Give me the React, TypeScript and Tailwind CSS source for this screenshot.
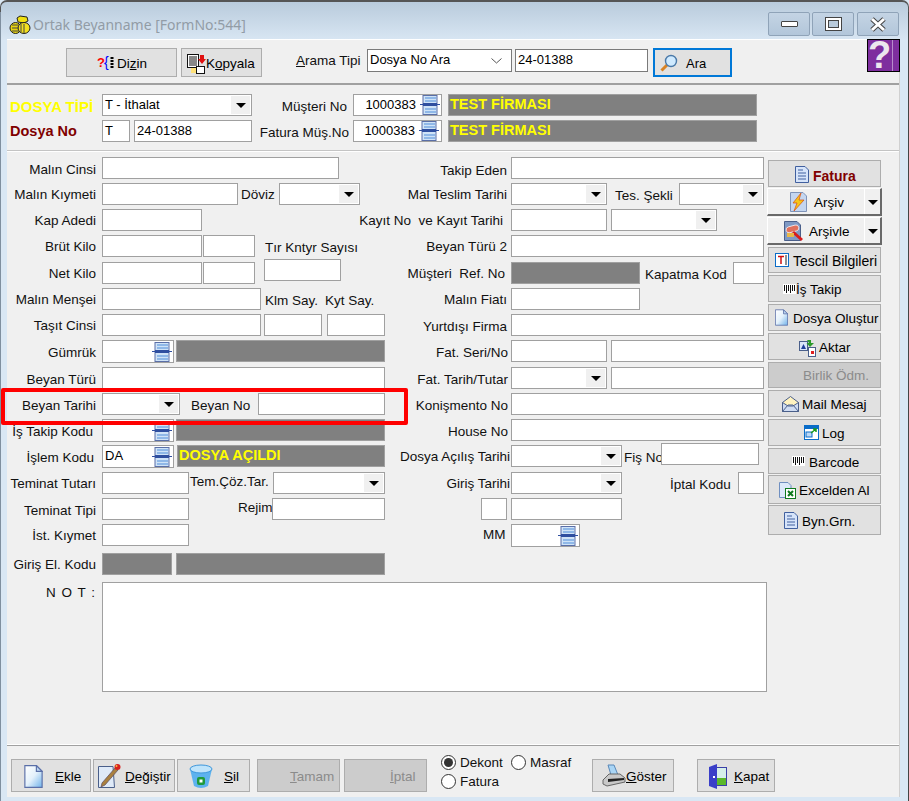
import React from "react";

function L({ c, children }: { c: string; children: React.ReactNode }) {
  return <div className={`absolute h-[16px] leading-[18px] whitespace-nowrap text-[13.5px] text-[#111] ${c}`}>{children}</div>;
}
function R({ c, children }: { c: string; children: React.ReactNode }) {
  return <div className={`absolute h-[16px] leading-[18px] whitespace-nowrap text-[13.5px] text-[#111] ${c}`}>{children}</div>;
}
function I({ c, children }: { c: string; children?: React.ReactNode }) {
  return <div className={`absolute bg-white border border-[#a0a0a0] text-[13px] leading-[19px] pl-[2px] whitespace-nowrap overflow-hidden text-black ${c}`}>{children}</div>;
}
function G({ c, children }: { c: string; children?: React.ReactNode }) {
  return <div className={`absolute bg-[#808080] border border-[#a0a0a0] text-[14.5px] font-bold leading-[19px] pl-[1px] whitespace-nowrap overflow-hidden text-[#ffff00] ${c}`}>{children}</div>;
}
function Stack({ c }: { c: string }) {
  return (
    <svg className={`absolute ${c}`} width="20" height="20" viewBox="0 0 20 20">
      <rect x="3" y="0.5" width="14" height="19" fill="#cfe3f7" stroke="#5a6fa8" />
      <rect x="5" y="2" width="11" height="2" fill="#8fb8e8" />
      <rect x="5" y="5" width="11" height="2" fill="#8fb8e8" />
      <rect x="5" y="13" width="11" height="2" fill="#8fb8e8" />
      <rect x="5" y="16" width="11" height="2" fill="#8fb8e8" />
      <rect x="3" y="8" width="14" height="3" fill="#2f4fa0" />
      <rect x="0" y="9" width="20" height="1" fill="#2f4fa0" />
    </svg>
  );
}
function Arrow() {
  return (
    <div className="absolute right-[1px] top-[1px] bottom-[1px] w-[19px] bg-[#f0f0f0] flex items-center justify-center">
      <div className="w-0 h-0 border-l-[5px] border-r-[5px] border-t-[5px] border-l-transparent border-r-transparent border-t-black" />
    </div>
  );
}
function C({ c, children }: { c: string; children?: React.ReactNode }) {
  return <I c={c}>{children}<Arrow /></I>;
}
function B({ c, children, off }: { c: string; children?: React.ReactNode; off?: boolean }) {
  return (
    <div className={`absolute border border-[#adadad] text-[13.5px] whitespace-nowrap ${off ? "bg-[#cccccc] text-[#8b8b8b]" : "bg-[#e1e1e1] text-black"} ${c}`}>
      {children}
    </div>
  );
}
function T({ c, children }: { c: string; children: React.ReactNode }) {
  return <span className={`absolute h-[16px] leading-[18px] ${c}`}>{children}</span>;
}
function Doc({ c, w = 16, h = 20 }: { c: string; w?: number; h?: number }) {
  return (
    <svg className={`absolute ${c}`} width={w} height={h} viewBox="0 0 16 20">
      <defs>
        <linearGradient id="dg" x1="0" y1="0" x2="1" y2="1">
          <stop offset="0" stopColor="#ffffff" />
          <stop offset="0.5" stopColor="#e4f1fb" />
          <stop offset="1" stopColor="#6fb2ea" />
        </linearGradient>
      </defs>
      <path d="M0.5 0.5H10.500L15.500 5.500V19.500H0.500Z" fill="url(#dg)" stroke="#5a6fa8" />
      <path d="M10.500 0.500V5.500H15.500Z" fill="#bcd6f0" stroke="#5a6fa8" />
    </svg>
  );
}
function Lines({ c }: { c: string }) {
  return (
    <svg className={`absolute ${c}`} width="14" height="17" viewBox="0 0 14 17">
      <path d="M0.5 0.5H10L13.500 4V16.500H0.500Z" fill="#d6e4fa" stroke="#41609f" />
      <path d="M3 4H8M3 7H11M3 10H11M3 13H11" stroke="#41609f" />
    </svg>
  );
}
function Bar({ c }: { c: string }) {
  return (
    <svg className={`absolute ${c}`} width="13" height="10" viewBox="0 0 13 10">
      <rect width="13" height="10" fill="#fff" />
      <path d="M1.500 1V7M3.500 1V9M5.500 1V7M7.500 1V9M9.500 1V7M11.500 1V7" stroke="#111" />
    </svg>
  );
}
function Radio({ c, on }: { c: string; on?: boolean }) {
  return (
    <div className={`absolute w-[15px] h-[15px] rounded-full border border-[#333] bg-white flex items-center justify-center ${c}`}>
      {on && <div className="w-[9px] h-[9px] rounded-full bg-[#333]" />}
    </div>
  );
}

export default function App() {
  return (
    <div className="relative w-[909px] h-[801px] overflow-hidden text-[13px] bg-[#d9e7f4] font-[Liberation_Sans,Arial,sans-serif]">
      {/* title bar */}
      <div className="absolute left-0 top-0 w-[909px] h-[40px] rounded-t-[7px] border-t-2 border-x border-[#555] bg-gradient-to-b from-[#b9cbdc] to-[#d8e6f3]" />
      <div className="absolute left-0 top-[12px] bottom-0 w-[1px] bg-[#7f8f9f]" />
      <div className="absolute right-0 top-[12px] bottom-0 w-[1px] bg-[#444]" />
      <svg className="absolute left-[9px] top-[15px]" width="22" height="20" viewBox="0 0 22 20">
        <path d="M11 1L18 2L19 6L15 8L9 7L8 3Z" fill="#f0e010" stroke="#222" />
        <ellipse cx="6.500" cy="13" rx="5.500" ry="5.500" fill="#e8d510" stroke="#222" />
        <ellipse cx="15" cy="13" rx="6" ry="5.500" fill="#f3e020" stroke="#222" />
        <path d="M3 10h7M3 13h7M3 16h7M12 9v8M15 9v9" stroke="#444" />
      </svg>
      <div className="absolute left-[33px] top-[15px] h-[20px] leading-[20px] text-[14px] text-[#929ca6] font-[Noto_Sans,sans-serif]">Ortak Beyanname [FormNo:544]</div>

      {[
        ["left-[768px]", "min"],
        ["left-[812px]", "max"],
        ["left-[857px]", "close"],
      ].map(([p, k]) => (
        <div key={k} className={`absolute top-[12px] w-[42px] h-[24px] rounded-[2px] border border-[#8fa3b8] bg-gradient-to-b from-[#c4d4e4] to-[#b2c6da] flex items-center justify-center ${p}`}>
          {k === "min" && <div className="w-[17px] h-[6px] bg-white border border-[#444] rounded-[1px]" />}
          {k === "max" && <div className="w-[17px] h-[14px] bg-white border border-[#444] p-[2px]"><div className="w-full h-full bg-[#b9cbdc] border border-[#444]" /></div>}
          {k === "close" && (
            <svg width="18" height="15" viewBox="0 0 18 15">
              <path d="M3 2L15 13M15 2L3 13" stroke="#444" strokeWidth="5" />
              <path d="M3 2L15 13M15 2L3 13" stroke="#fff" strokeWidth="3" />
            </svg>
          )}
        </div>
      ))}

      {/* client */}
      <div className="absolute left-[7px] top-[39px] w-[893px] h-[758px] bg-[#f0f0f0] border-t border-white border-r border-r-[#d0d0d0]" />

      {/* toolbar */}
      <div className="absolute left-[7px] top-[83px] w-[892px] h-[2px] bg-[#a0a0a0]" />
      <B c="left-[66px] top-[48px] w-[111px] h-[29px]">
        <span className="absolute left-[30px] top-[6px] text-[13px] font-bold text-[#ff0000] leading-[16px]">?</span>
        <span className="absolute left-[37px] top-[5px] text-[14px] text-[#0000ff] leading-[16px]">{"{"}</span>
        <svg className="absolute left-[43px] top-[8px]" width="4" height="12" viewBox="0 0 4 12"><path d="M2 0V12" stroke="#000" strokeWidth="3" strokeDasharray="2 1" /></svg>
        <T c="left-[50px] top-[6px]">Di<u>z</u>in</T>
      </B>
      <B c="left-[181px] top-[48px] w-[81px] h-[29px]">
        <svg className="absolute left-[5px] top-[5px]" width="20" height="20" viewBox="0 0 20 20">
          <rect x="0.500" y="0.500" width="11" height="13" fill="#fff" stroke="#111" />
          <path d="M2 3H10M2 5H10M2 7H10M2 9H10M2 11H10" stroke="#111" />
          <path d="M13 1H17V5H19L15 10L11 5H13Z" fill="#e01010" />
          <rect x="9.500" y="12.500" width="8" height="7" fill="#fff" stroke="#111" />
          <rect x="4" y="14" width="5" height="5" fill="#ffe27a" />
        </svg>
        <T c="left-[24px] top-[6px]">K<u>o</u>pyala</T>
      </B>
      <L c="left-[296px] top-[52px]"><u>A</u>rama Tipi</L>
      <div className="absolute left-[367px] top-[49px] w-[145px] h-[23px] bg-white border border-[#7a7a7a] text-[13px] leading-[19px] pl-[2px]">
        Dosya No Ara
        <svg className="absolute right-[9px] top-[8px]" width="11" height="6" viewBox="0 0 11 6"><path d="M0.500 0.500L5.500 5L10.500 0.500" fill="none" stroke="#555" /></svg>
      </div>
      <div className="absolute left-[515px] top-[49px] w-[133px] h-[23px] bg-white border border-[#7a7a7a] text-[13px] leading-[19px] pl-[2px]">24-01388</div>
      <div className="absolute left-[653px] top-[48px] w-[79px] h-[29px] bg-[#e1e1e1] border-2 border-[#0078d7]">
        <svg className="absolute left-[5px] top-[4px]" width="18" height="18" viewBox="0 0 18 18">
          <path d="M7 11L1.500 16.500" stroke="#d98324" strokeWidth="3" />
          <circle cx="11" cy="7" r="5.500" fill="#cfeaff" stroke="#4a79a8" strokeWidth="1.400" />
        </svg>
        <T c="left-[31px] top-[5px]">Ara</T>
      </div>
      <div className="absolute left-[867px] top-[39px] w-[33px] h-[33px] bg-[#7e2e9e] border border-black">
        <div className="absolute left-[24px] top-0 bottom-0 w-[1px] bg-[#b78ccb]" />
        <div className="absolute left-0 top-0 text-[38px] leading-[31px] font-bold text-[#ece6ee]">?</div>
      </div>

      {/* header */}
      <div className="absolute left-[10px] top-[98px] h-[16px] leading-[18px] text-[15px] font-bold text-[#ffff00]">DOSYA TİPİ</div>
      <div className="absolute left-[10px] top-[122px] h-[16px] leading-[18px] text-[14.5px] font-bold text-[#800000]">Dosya No</div>
      <C c="left-[102px] top-[94px] w-[150px] h-[22px]">T - İthalat</C>
      <I c="left-[102px] top-[120px] w-[28px] h-[22px]">T</I>
      <I c="left-[134px] top-[120px] w-[118px] h-[22px]">24-01388</I>
      <L c="right-[562px] top-[98px]">Müşteri No</L>
      <L c="right-[560px] top-[124px]">Fatura Müş.No</L>
      <I c="left-[353px] top-[94px] w-[89px] h-[22px]"><span className="absolute right-[25px] top-0">1000383</span><Stack c="right-[1px] top-0" /></I>
      <I c="left-[353px] top-[120px] w-[89px] h-[22px]"><span className="absolute right-[26px] top-0">1000383</span><Stack c="right-[2px] top-0" /></I>
      <G c="left-[448px] top-[94px] w-[309px] h-[22px]">TEST FİRMASI</G>
      <G c="left-[448px] top-[120px] w-[309px] h-[22px]">TEST FİRMASI</G>
      <div className="absolute left-[7px] top-[150px] w-[892px] h-[1px] bg-[#c4c4c4]" />
      <div className="absolute left-[7px] top-[151px] w-[892px] h-[1px] bg-white" />

      {/* left column labels */}
      <L c="right-[813px] top-[161px]">Malın Cinsi</L>
      <L c="right-[813px] top-[186px]">Malın Kıymeti</L>
      <L c="right-[813px] top-[212px]">Kap Adedi</L>
      <L c="right-[813px] top-[238px]">Brüt Kilo</L>
      <L c="right-[813px] top-[265px]">Net Kilo</L>
      <L c="right-[813px] top-[291px]">Malın Menşei</L>
      <L c="right-[813px] top-[317px]">Taşıt Cinsi</L>
      <L c="right-[813px] top-[344px]">Gümrük</L>
      <L c="right-[813px] top-[371px]">Beyan Türü</L>
      <L c="right-[813px] top-[397px]">Beyan Tarihi</L>
      <L c="right-[816px] top-[423px]">İş Takip Kodu</L>
      <L c="right-[815px] top-[449px]">İşlem Kodu</L>
      <L c="right-[813px] top-[475px]">Teminat Tutarı</L>
      <L c="right-[813px] top-[502px]">Teminat Tipi</L>
      <L c="right-[813px] top-[527px]">İst. Kıymet</L>
      <L c="right-[813px] top-[556px]">Giriş El. Kodu</L>
      <L c="left-[46px] top-[584px] tracking-[1px]">N O T :</L>

      {/* left column fields */}
      <I c="left-[102px] top-[157px] w-[237px] h-[22px]" />
      <I c="left-[102px] top-[183px] w-[136px] h-[22px]" />
      <L c="left-[241px] top-[186px]">Döviz</L>
      <C c="left-[279px] top-[183px] w-[81px] h-[22px]" />
      <I c="left-[102px] top-[209px] w-[100px] h-[22px]" />
      <I c="left-[102px] top-[235px] w-[100px] h-[22px]" />
      <I c="left-[203px] top-[235px] w-[52px] h-[22px]" />
      <L c="left-[265px] top-[239px]">Tır Kntyr Sayısı</L>
      <I c="left-[102px] top-[262px] w-[100px] h-[22px]" />
      <I c="left-[203px] top-[262px] w-[52px] h-[22px]" />
      <I c="left-[264px] top-[259px] w-[77px] h-[22px]" />
      <I c="left-[102px] top-[288px] w-[159px] h-[22px]" />
      <L c="left-[265px] top-[292px]">Klm Say.</L>
      <L c="left-[325px] top-[292px]">Kyt Say.</L>
      <I c="left-[102px] top-[314px] w-[159px] h-[22px]" />
      <I c="left-[264px] top-[314px] w-[58px] h-[22px]" />
      <I c="left-[327px] top-[314px] w-[58px] h-[22px]" />
      <I c="left-[102px] top-[340px] w-[72px] h-[23px]"><Stack c="right-[1px] top-[1px]" /></I>
      <G c="left-[176px] top-[340px] w-[209px] h-[22px]" />
      <I c="left-[102px] top-[367px] w-[283px] h-[22px]" />
      <C c="left-[102px] top-[393px] w-[78px] h-[22px]" />
      <L c="left-[191px] top-[397px]">Beyan No</L>
      <I c="left-[258px] top-[393px] w-[127px] h-[22px]" />
      <I c="left-[102px] top-[419px] w-[72px] h-[23px]"><Stack c="right-[1px] top-[1px]" /></I>
      <G c="left-[176px] top-[419px] w-[209px] h-[22px]" />
      <I c="left-[102px] top-[445px] w-[72px] h-[23px]">DA<Stack c="right-[1px] top-[1px]" /></I>
      <G c="left-[177px] top-[445px] w-[208px] h-[22px]">DOSYA AÇILDI</G>
      <I c="left-[102px] top-[472px] w-[87px] h-[22px]" />
      <L c="left-[190px] top-[473px]">Tem.Çöz.Tar.</L>
      <C c="left-[273px] top-[472px] w-[112px] h-[22px]" />
      <I c="left-[102px] top-[498px] w-[87px] h-[22px]" />
      <L c="left-[238px] top-[499px]">Rejim</L>
      <I c="left-[272px] top-[498px] w-[113px] h-[22px]" />
      <I c="left-[102px] top-[524px] w-[87px] h-[22px]" />
      <G c="left-[102px] top-[553px] w-[70px] h-[22px]" />
      <G c="left-[176px] top-[553px] w-[209px] h-[22px]" />
      <I c="left-[102px] top-[582px] w-[665px] h-[110px]" />

      {/* middle labels */}
      <L c="right-[402px] top-[162px]">Takip Eden</L>
      <L c="right-[402px] top-[186px]">Mal Teslim Tarihi</L>
      <L c="right-[406px] top-[212px]">Kayıt&nbsp;No&nbsp; ve Kayıt Tarihi</L>
      <L c="right-[402px] top-[238px]">Beyan Türü 2</L>
      <L c="right-[404px] top-[265px]">Müşteri&nbsp; Ref. No</L>
      <L c="right-[402px] top-[291px]">Malın Fiatı</L>
      <L c="right-[402px] top-[318px]">Yurtdışı Firma</L>
      <L c="right-[401px] top-[344px]">Fat. Seri/No</L>
      <L c="right-[401px] top-[371px]">Fat. Tarih/Tutar</L>
      <L c="right-[401px] top-[397px]">Konişmento No</L>
      <L c="right-[401px] top-[423px]">House No</L>
      <L c="right-[399px] top-[448px]">Dosya Açılış Tarihi</L>
      <L c="right-[399px] top-[475px]">Giriş Tarihi</L>
      <L c="left-[483px] top-[526px]">MM</L>

      {/* middle fields */}
      <I c="left-[511px] top-[157px] w-[253px] h-[22px]" />
      <C c="left-[511px] top-[183px] w-[96px] h-[22px]" />
      <L c="left-[615px] top-[187px]">Tes. Şekli</L>
      <C c="left-[679px] top-[183px] w-[85px] h-[22px]" />
      <I c="left-[511px] top-[209px] w-[96px] h-[22px]" />
      <C c="left-[611px] top-[209px] w-[106px] h-[22px]" />
      <I c="left-[511px] top-[235px] w-[253px] h-[22px]" />
      <G c="left-[511px] top-[262px] w-[129px] h-[22px]" />
      <L c="left-[645px] top-[266px]">Kapatma Kod</L>
      <I c="left-[733px] top-[262px] w-[31px] h-[22px]" />
      <I c="left-[511px] top-[288px] w-[129px] h-[22px]" />
      <I c="left-[511px] top-[314px] w-[253px] h-[22px]" />
      <I c="left-[511px] top-[340px] w-[96px] h-[22px]" />
      <I c="left-[611px] top-[340px] w-[153px] h-[22px]" />
      <C c="left-[511px] top-[367px] w-[96px] h-[22px]" />
      <I c="left-[611px] top-[367px] w-[153px] h-[22px]" />
      <I c="left-[511px] top-[393px] w-[253px] h-[22px]" />
      <I c="left-[511px] top-[419px] w-[253px] h-[22px]" />
      <C c="left-[511px] top-[445px] w-[111px] h-[22px]" />
      <L c="left-[624px] top-[449px]">Fiş No</L>
      <I c="left-[661px] top-[443px] w-[98px] h-[22px]" />
      <C c="left-[511px] top-[472px] w-[111px] h-[22px]" />
      <L c="left-[670px] top-[476px]">İptal Kodu</L>
      <I c="left-[738px] top-[472px] w-[26px] h-[22px]" />
      <I c="left-[481px] top-[498px] w-[26px] h-[22px]" />
      <I c="left-[511px] top-[498px] w-[111px] h-[22px]" />
      <I c="left-[511px] top-[524px] w-[69px] h-[23px]"><Stack c="right-[1px] top-[1px]" /></I>

      {/* red highlight */}
      <div className="absolute left-[1px] top-[388px] w-[407px] h-[37px] rounded-[2px] border-[4px] border-[#ff0000]" />

      {/* right buttons */}
      <B c="left-[768px] top-[160px] w-[113px] h-[27px]">
        <Lines c="left-[26px] top-[5px]" />
        <T c="left-[44px] top-[6px] font-bold text-[14px] text-[#800000]">Fatura</T>
      </B>
      {[
        ["top-[188px]", "Arşiv", "left-[46px]"],
        ["top-[217px]", "Arşivle", "left-[41px]"],
      ].map(([t, s, l], i) => (
        <div key={s} className={`absolute left-[767px] w-[115px] h-[28px] bg-[#f0f0f0] border-t border-l border-t-white border-l-white border-b-2 border-r-2 border-b-[#696969] border-r-[#696969] text-[13.5px] ${t}`}>
          <div className="absolute left-[96px] top-0 bottom-0 w-[1px] bg-white" />
          <div className="absolute left-[100px] top-[11px] w-0 h-0 border-l-[5px] border-r-[5px] border-t-[5px] border-l-transparent border-r-transparent border-t-black" />
          {i === 0 ? (
            <svg className="absolute left-[22px] top-[3px]" width="17" height="20" viewBox="0 0 17 20">
              <path d="M0.500 0.500H13L16.500 4V19.500H0.500Z" fill="#c4d6f0" stroke="#7f93b8" />
              <path d="M11 1L3 11H7L4 19L14 8H9Z" fill="#f5c518" stroke="#d84a10" strokeWidth="0.700" />
            </svg>
          ) : (
            <svg className="absolute left-[16px] top-[3px]" width="20" height="21" viewBox="0 0 20 21">
              <path d="M0.500 0.500H13L16.500 4V19.500H0.500Z" fill="#7f99c4" stroke="#4a5f8a" />
              <rect x="2" y="5" width="13" height="6" rx="3" fill="#e0705c" stroke="#fff" strokeWidth="0.700" transform="rotate(-15 8 8)" />
              <path d="M9 11L18 19" stroke="#d81c1c" strokeWidth="3" />
              <rect x="3" y="12" width="7" height="4" fill="#e8b84a" />
            </svg>
          )}
          <T c={`${l} top-[5px]`}>{s}</T>
        </div>
      ))}
      <B c="left-[768px] top-[247px] w-[113px] h-[26px]">
        <svg className="absolute left-[6px] top-[5px]" width="14" height="14" viewBox="0 0 14 14">
          <rect x="0.500" y="0.500" width="13" height="13" fill="#fff" stroke="#0a6cc8" />
          <path d="M3 3.500H9M6 3.500V11" stroke="#d01010" strokeWidth="1.500" />
          <path d="M11 2V12" stroke="#222" />
        </svg>
        <T c="left-[24px] top-[4px] text-[14px]">Tescil Bilgileri</T>
      </B>
      <B c="left-[768px] top-[275px] w-[113px] h-[27px]"><Bar c="left-[14px] top-[8px]" /><T c="left-[27px] top-[5px]">İş Takip</T></B>
      <B c="left-[768px] top-[304px] w-[113px] h-[27px]"><Doc c="left-[6px] top-[4px]" w={13} h={17} /><T c="left-[24px] top-[5px]">Dosya Oluştur</T></B>
      <B c="left-[768px] top-[333px] w-[113px] h-[27px]">
        <svg className="absolute left-[30px] top-[5px]" width="18" height="18" viewBox="0 0 18 18">
          <rect x="0.500" y="2.500" width="8" height="9" fill="#dbe6f8" stroke="#4a5f8a" />
          <path d="M2 10L4.500 5L7 10Z" fill="#1f3f9a" />
          <rect x="9.500" y="8.500" width="7" height="9" fill="#fff" stroke="#4a5f8a" />
          <rect x="12" y="12" width="3" height="3" fill="#e02020" />
          <path d="M8 1H12V4H15L11 8L7.500 4H10" fill="#2a9a2a" />
        </svg>
        <T c="left-[50px] top-[5px]">Aktar</T>
      </B>
      <B off c="left-[768px] top-[362px] w-[113px] h-[26px]"><T c="left-[34px] top-[4px]">Birlik Ödm.</T></B>
      <B c="left-[768px] top-[390px] w-[113px] h-[27px]">
        <svg className="absolute left-[13px] top-[5px]" width="17" height="16" viewBox="0 0 17 16">
          <path d="M0.500 6.500L8.500 0.500L16.500 6.500V15.500H0.500Z" fill="#fff3c0" stroke="#4a5f8a" />
          <path d="M0.500 15.500L6 9L11 9L16.500 15.500M0.500 6.500L6 10H11L16.500 6.500V15.500H0.500Z" fill="#cfdcf2" stroke="#4a5f8a" />
        </svg>
        <T c="left-[33px] top-[5px]">Mail Mesaj</T>
      </B>
      <B c="left-[768px] top-[419px] w-[113px] h-[27px]">
        <svg className="absolute left-[35px] top-[5px]" width="15" height="15" viewBox="0 0 15 15">
          <rect x="0.500" y="0.500" width="14" height="14" fill="#fff" stroke="#0a6cc8" />
          <rect x="1" y="1" width="13" height="3" fill="#0a6cc8" />
          <rect x="2" y="7" width="6" height="5" fill="#bcd8f6" stroke="#0a6cc8" />
          <path d="M7 8L12 4M9 4H12V7" fill="none" stroke="#1a9a1a" strokeWidth="1.500" />
        </svg>
        <T c="left-[53px] top-[5px]">Log</T>
      </B>
      <B c="left-[768px] top-[448px] w-[113px] h-[26px]"><Bar c="left-[23px] top-[7px]" /><T c="left-[40px] top-[5px]">Barcode</T></B>
      <B c="left-[768px] top-[475px] w-[113px] h-[29px]">
        <svg className="absolute left-[10px] top-[6px]" width="17" height="17" viewBox="0 0 17 17">
          <path d="M0.500 0.500H9L12 3.500V15.500H0.500Z" fill="#dce9fa" stroke="#6f8fc0" />
          <rect x="6.500" y="6.500" width="10" height="10" fill="#fff" stroke="#0f7a1f" />
          <path d="M9 9L14 14M14 9L9 14" stroke="#0f7a1f" strokeWidth="2" />
        </svg>
        <T c="left-[30px] top-[6px]">Excelden Al</T>
      </B>
      <B c="left-[768px] top-[505px] w-[113px] h-[30px]"><Lines c="left-[15px] top-[6px]" /><T c="left-[33px] top-[7px]">Byn.Grn.</T></B>

      {/* footer */}
      <div className="absolute left-[7px] top-[744px] w-[892px] h-[1px] bg-white" />
      <div className="absolute left-[7px] top-[745px] w-[892px] h-[1px] bg-[#a0a0a0]" />
      <B c="left-[11px] top-[759px] w-[80px] h-[33px]"><Doc c="left-[12px] top-[5px]" w={19} h={23} /><T c="left-[43px] top-[8px]"><u>E</u>kle</T></B>
      <B c="left-[93px] top-[759px] w-[82px] h-[33px]">
        <svg className="absolute left-[3px] top-[3px]" width="25" height="26" viewBox="0 0 25 26">
          <path d="M1.500 3.500H16L17.500 24.500H1.500Z" fill="#dfeaf8" stroke="#4a5f8a" />
          <path d="M5 20L18 5L21 7L8 22L4 24Z" fill="#a9803f" stroke="#5a4a60" strokeWidth="0.700" />
          <circle cx="20.500" cy="4" r="3" fill="#d8201c" />
          <circle cx="19.500" cy="3" r="1" fill="#f4c040" />
        </svg>
        <T c="left-[31px] top-[8px]"><u>D</u>eğiştir</T>
      </B>
      <B c="left-[177px] top-[759px] w-[73px] h-[33px]">
        <svg className="absolute left-[11px] top-[4px]" width="24" height="25" viewBox="0 0 24 25">
          <path d="M1 5L5 22Q12 26 19 22L23 5Z" fill="#5db2ee" />
          <ellipse cx="12" cy="5" rx="11" ry="4" fill="#bfe4fb" stroke="#3d97dc" />
          <rect x="8" y="13" width="8" height="8" rx="2" fill="#1f9a3a" />
          <rect x="10.500" y="15.500" width="3" height="3" fill="#fff" />
        </svg>
        <T c="left-[46px] top-[8px]"><u>S</u>il</T>
      </B>
      <B off c="left-[257px] top-[759px] w-[83px] h-[33px]"><T c="left-[32px] top-[8px]"><u>T</u>amam</T></B>
      <B off c="left-[344px] top-[759px] w-[83px] h-[33px]"><T c="left-[45px] top-[8px]"><u>İ</u>ptal</T></B>

      <Radio c="left-[441px] top-[755px]" on />
      <R c="left-[460px] top-[754px]">Dekont</R>
      <Radio c="left-[511px] top-[755px]" />
      <R c="left-[530px] top-[754px]">Masraf</R>
      <Radio c="left-[441px] top-[774px]" />
      <R c="left-[460px] top-[773px]">Fatura</R>

      <B c="left-[592px] top-[759px] w-[82px] h-[33px]">
        <svg className="absolute left-[9px] top-[4px]" width="24" height="24" viewBox="0 0 24 24">
          <path d="M6 1H12L16 11H9Z" fill="#a9d5f5" stroke="#5a88b8" />
          <path d="M1 16L7 10H18L23 14V18L5 22L1 20Z" fill="#c8c8c8" stroke="#666" />
          <path d="M6 15L22 14V16L6 18Z" fill="#222" />
        </svg>
        <T c="left-[33px] top-[8px]"><u>G</u>öster</T>
      </B>
      <B c="left-[697px] top-[759px] w-[78px] h-[33px]">
        <svg className="absolute left-[10px] top-[4px]" width="20" height="25" viewBox="0 0 20 25">
          <rect x="8.500" y="3.500" width="10" height="18" fill="#d6f0ea" stroke="#3a3fa8" />
          <rect x="9" y="14" width="9" height="7" fill="#5bb82a" />
          <path d="M1 3L9 0V25L1 22Z" fill="#3a3fc8" />
          <rect x="5" y="12" width="2" height="2" fill="#fff" />
        </svg>
        <T c="left-[36px] top-[8px]"><u>K</u>apat</T>
      </B>
    </div>
  );
}
